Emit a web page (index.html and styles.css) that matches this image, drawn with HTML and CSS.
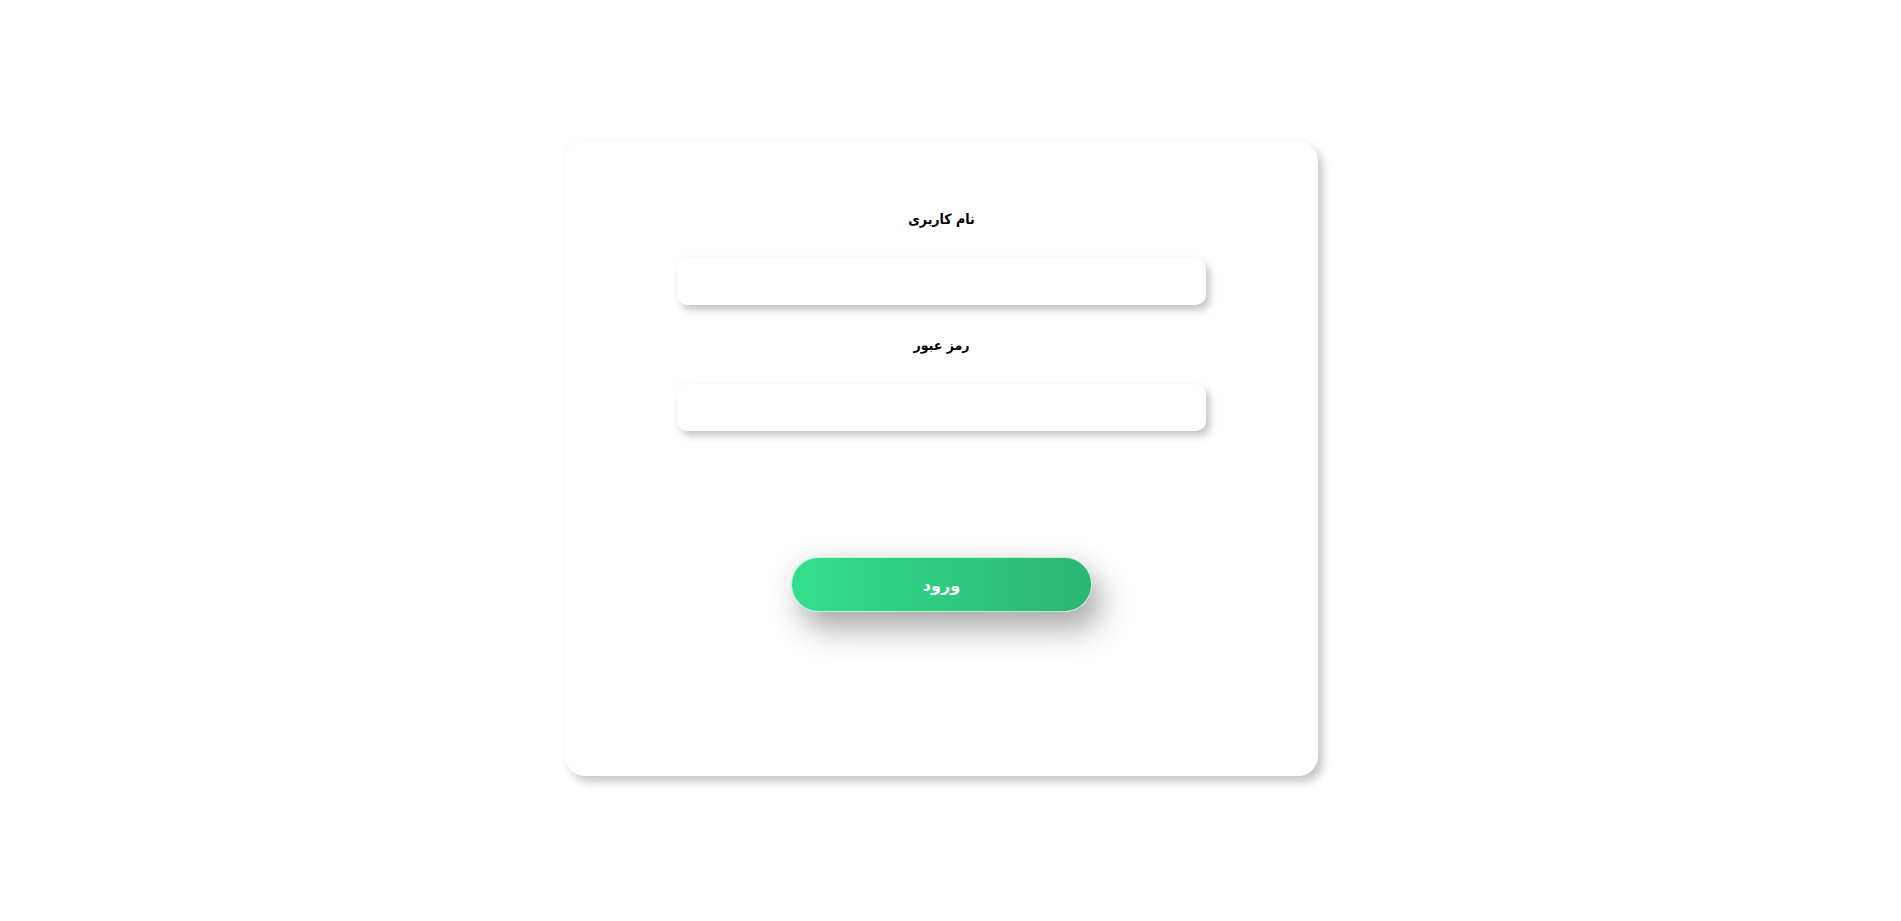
FILE: index.html
```html
<!DOCTYPE html>
<html lang="fa" dir="rtl">
<head>
<meta charset="utf-8">
<title>ورود</title>
<link rel="stylesheet" href="styles.css">
</head>
<body>
<main class="page">
  <form class="card">
    <label class="label" for="user">نام کاربری</label>
    <input class="field" id="user" type="text">
    <label class="label" for="pass">رمز عبور</label>
    <input class="field" id="pass" type="password">
    <button class="btn" type="button">ورود</button>
  </form>
</main>
</body>
</html>
```
FILE: styles.css
```css
html, body {
  margin: 0;
  padding: 0;
  background: #ffffff;
  height: 100%;
}
.page {
  height: 921px;
  display: flex;
  justify-content: center;
  align-items: flex-start;
  padding-right: 18px;
  box-sizing: border-box;
  font-family: "DejaVu Sans Condensed", "DejaVu Sans", sans-serif;
}
.card {
  margin-top: 141px;
  width: 753px;
  height: 635px;
  box-sizing: border-box;
  background: #fefefe;
  border-radius: 20px;
  box-shadow: 5px 6px 9px rgba(0, 0, 0, 0.22), -4px -4px 8px rgba(0, 0, 0, 0.01);
  display: flex;
  flex-direction: column;
  align-items: center;
  padding-top: 68px;
}
.label {
  display: block;
  font-family: "DejaVu Sans Condensed", "DejaVu Sans", sans-serif;
  font-size: 14px;
  font-weight: bold;
  line-height: 20px;
  color: #000;
  text-align: center;
}
.field {
  display: block;
  width: 529px;
  height: 47px;
  box-sizing: border-box;
  margin: 29px 0 30px;
  border: none;
  border-radius: 10px;
  background: #fefefe;
  box-shadow: 4px 5px 7px rgba(0, 0, 0, 0.22), -3px -3px 6px rgba(0, 0, 0, 0.01);
  outline: none;
}
.field + .label + .field {
  margin-bottom: 126px;
}
.btn {
  width: 301px;
  height: 55px;
  border: 1px solid rgba(255, 255, 255, 0.7);
  border-radius: 28px;
  background: linear-gradient(to right, #33df8c, #2bb573);
  color: #ffffff;
  font-family: "Noto Sans", "DejaVu Sans", sans-serif;
  font-weight: bold;
  font-size: 16px;
  box-shadow: 10px 18px 30px rgba(0, 0, 0, 0.3), 0 0 26px rgba(0, 0, 0, 0.07);
  cursor: pointer;
}
```
